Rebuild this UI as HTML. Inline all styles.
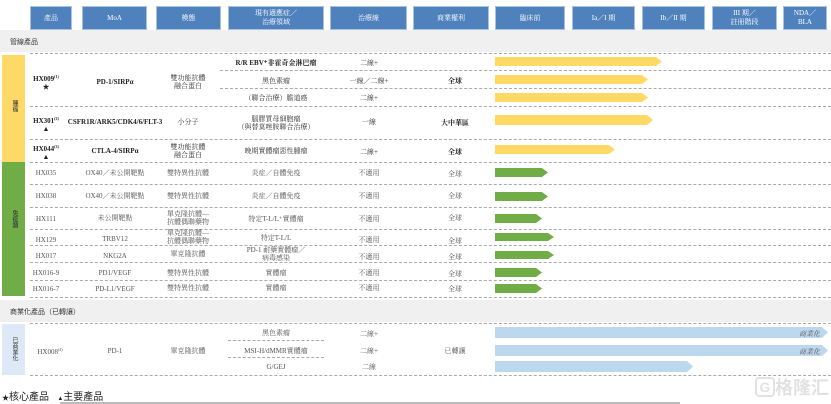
<!DOCTYPE html>
<html><head><meta charset="utf-8"><style>
*{margin:0;padding:0;box-sizing:border-box}
body{width:831px;height:404px;background:#fff;position:relative;overflow:hidden;font-family:"Liberation Serif","Noto Serif CJK SC","Noto Sans CJK TC",serif;color:#333}
.a{position:absolute}
.h{position:absolute;top:6px;height:24px;background:#4f81bd;color:#fff;font-size:7px;display:flex;align-items:center;justify-content:center;text-align:center;line-height:9px;border:1px solid #a8c2e2}
.d{position:absolute;height:0;border-top:1px dashed #aaa}
.t{position:absolute;font-size:7px;transform:translate(-50%,-50%);text-align:center;white-space:nowrap;line-height:8px}
.b{font-weight:bold;color:#222}
.g{color:#555}
.bar{position:absolute;clip-path:polygon(0 0,calc(100% - 6px) 0,100% 50%,calc(100% - 6px) 100%,0 100%)}
.y{background:#ffd966}.gr{background:#70ad47}.bl{background:#bdd7ee}
.v{position:absolute;font-size:6px;writing-mode:vertical-rl;font-family:"Liberation Sans","Noto Sans CJK TC",sans-serif}
</style></head><body>
<div class="h" style="left:30px;width:42px">產品</div>
<div class="h" style="left:82px;width:65px">MoA</div>
<div class="h" style="left:156px;width:65px">模態</div>
<div class="h" style="left:228px;width:96px">現有適應症／<br>治療領域</div>
<div class="h" style="left:330px;width:77px">治療線</div>
<div class="h" style="left:413px;width:76px">商業權利</div>
<div class="h" style="left:495px;width:70px">臨床前</div>
<div class="h" style="left:572px;width:63px">Ia／I 期</div>
<div class="h" style="left:642px;width:63px">Ib／II 期</div>
<div class="h" style="left:712px;width:65px">III 期／<br>註冊階段</div>
<div class="h" style="left:783px;width:44px">NDA／<br>BLA</div>

<div class="a" style="left:0;top:30px;width:831px;height:22px;background:#f0f0f0"></div>
<div class="a" style="left:10px;top:37px;font-size:7px;font-family:'Liberation Sans','Noto Sans CJK TC',sans-serif">管線產品</div>
<div class="a" style="left:0;top:300px;width:831px;height:22px;background:#f0f0f0"></div>
<div class="a" style="left:10px;top:307px;font-size:7px;font-family:'Liberation Sans','Noto Sans CJK TC',sans-serif">商業化產品（已轉讓）</div>

<div class="a" style="left:2px;top:55px;width:23px;height:107px;background:#ffd966"></div>
<div class="v" style="left:10px;top:100px">腫瘤</div>
<div class="a" style="left:2px;top:162px;width:23px;height:134px;background:#70ad47"></div>
<div class="v" style="left:10px;top:210px;color:#223">免疫類</div>
<div class="a" style="left:2px;top:324px;width:23px;height:51px;background:#dde9f6"></div>
<div class="v" style="left:10px;top:337px">已商業化</div>

<div class="d" style="left:30px;width:801px;top:53px"></div>
<div class="d" style="left:220px;width:611px;top:70px"></div>
<div class="d" style="left:220px;width:611px;top:88px"></div>
<div class="d" style="left:30px;width:801px;top:106px"></div>
<div class="d" style="left:30px;width:801px;top:139px"></div>
<div class="d" style="left:30px;width:801px;top:162px"></div>
<div class="d" style="left:30px;width:801px;top:184px"></div>
<div class="d" style="left:30px;width:801px;top:207px"></div>
<div class="d" style="left:30px;width:801px;top:229px"></div>
<div class="d" style="left:30px;width:801px;top:245px"></div>
<div class="d" style="left:30px;width:801px;top:262px"></div>
<div class="d" style="left:30px;width:801px;top:280px"></div>
<div class="d" style="left:30px;width:801px;top:297px"></div>
<div class="d" style="left:30px;width:801px;top:323px"></div>
<div class="d" style="left:228px;width:96px;top:340px"></div>
<div class="d" style="left:228px;width:96px;top:357px"></div>
<div class="d" style="left:30px;width:801px;top:375px"></div>

<div class="t b" style="left:46px;top:82px">HX009<sup style="font-size:4px">(1)</sup><br>★</div>
<div class="t b" style="left:115px;top:82px">PD-1/SIRPα</div>
<div class="t" style="left:188px;top:82px">雙功能抗體<br>融合蛋白</div>
<div class="t b" style="left:276px;top:63px">R/R EBV⁺非霍奇金淋巴瘤</div>
<div class="t" style="left:276px;top:81px">黑色素瘤</div>
<div class="t" style="left:276px;top:98px">（聯合治療）膽道癌</div>
<div class="t" style="left:369px;top:63px">二線+</div>
<div class="t" style="left:369px;top:81px">一線／二線+</div>
<div class="t" style="left:369px;top:98px">二線+</div>
<div class="t b" style="left:455px;top:81px">全球</div>
<div class="t b" style="left:46px;top:124px">HX301<sup style="font-size:4px">(2)</sup><br>▲</div>
<div class="t b" style="left:115px;top:122px">CSFR1R/ARK5/CDK4/6/FLT-3</div>
<div class="t" style="left:188px;top:122px">小分子</div>
<div class="t" style="left:276px;top:123px">腦膠質母細胞瘤<br>（與替莫唑胺聯合治療）</div>
<div class="t" style="left:369px;top:122px">一線</div>
<div class="t b" style="left:455px;top:123px">大中華區</div>
<div class="t b" style="left:46px;top:152px">HX044<sup style="font-size:4px">(3)</sup><br>▲</div>
<div class="t b" style="left:115px;top:151px">CTLA-4/SIRPα</div>
<div class="t" style="left:188px;top:151px">雙功能抗體<br>融合蛋白</div>
<div class="t" style="left:276px;top:151px">晚期實體瘤惡性腫瘤</div>
<div class="t" style="left:369px;top:152px">二線+</div>
<div class="t b" style="left:455px;top:152px">全球</div>

<div class="t g" style="left:46px;top:173px">HX035</div><div class="t g" style="left:115px;top:173px">OX40／未公開靶點</div><div class="t g" style="left:188px;top:173px">雙特異性抗體</div><div class="t g" style="left:276px;top:173px">炎症／自體免疫</div><div class="t g" style="left:369px;top:173px">不適用</div><div class="t g" style="left:455px;top:174px">全球</div>
<div class="t g" style="left:46px;top:196px">HX038</div><div class="t g" style="left:115px;top:196px">OX40／未公開靶點</div><div class="t g" style="left:188px;top:196px">雙特異性抗體</div><div class="t g" style="left:276px;top:196px">炎症／自體免疫</div><div class="t g" style="left:369px;top:196px">不適用</div><div class="t g" style="left:455px;top:196px">全球</div>
<div class="t g" style="left:46px;top:219px">HX111</div><div class="t g" style="left:115px;top:218px">未公開靶點</div><div class="t g" style="left:188px;top:218px">單克隆抗體—<br>抗體偶聯藥物</div><div class="t g" style="left:276px;top:219px">特定T-L/L⁺實體瘤</div><div class="t g" style="left:369px;top:219px">不適用</div><div class="t g" style="left:455px;top:218px">全球</div>
<div class="t g" style="left:46px;top:240px">HX129</div><div class="t g" style="left:115px;top:239px">TRBV12</div><div class="t g" style="left:188px;top:237px">單克隆抗體—<br>抗體偶聯藥物</div><div class="t g" style="left:276px;top:238px">特定T-L/L</div><div class="t g" style="left:369px;top:240px">不適用</div><div class="t g" style="left:455px;top:241px">全球</div>
<div class="t g" style="left:46px;top:256px">HX017</div><div class="t g" style="left:115px;top:256px">NKG2A</div><div class="t g" style="left:188px;top:254px">單克隆抗體</div><div class="t g" style="left:276px;top:254px">PD-1 耐藥實體瘤／<br>病毒感染</div><div class="t g" style="left:369px;top:257px">不適用</div><div class="t g" style="left:455px;top:257px">全球</div>
<div class="t g" style="left:46px;top:273px">HX016-9</div><div class="t g" style="left:115px;top:273px">PD1/VEGF</div><div class="t g" style="left:188px;top:273px">雙特異性抗體</div><div class="t g" style="left:276px;top:273px">實體瘤</div><div class="t g" style="left:369px;top:273px">不適用</div><div class="t g" style="left:455px;top:274px">全球</div>
<div class="t g" style="left:46px;top:289px">HX016-7</div><div class="t g" style="left:115px;top:289px">PD-L1/VEGF</div><div class="t g" style="left:188px;top:288px">雙特異性抗體</div><div class="t g" style="left:276px;top:288px">實體瘤</div><div class="t g" style="left:369px;top:288px">不適用</div><div class="t g" style="left:455px;top:289px">全球</div>

<div class="t g" style="left:50px;top:351px">HX008<sup style="font-size:4px">(4)</sup></div>
<div class="t g" style="left:115px;top:351px">PD-1</div>
<div class="t g" style="left:188px;top:351px">單克隆抗體</div>
<div class="t g" style="left:276px;top:333px">黑色素瘤</div>
<div class="t g" style="left:276px;top:351px">MSI-H/dMMR實體瘤</div>
<div class="t g" style="left:276px;top:367px">G/GEJ</div>
<div class="t g" style="left:369px;top:334px">二線+</div>
<div class="t g" style="left:369px;top:351px">二線+</div>
<div class="t g" style="left:369px;top:367px">二線</div>
<div class="t g" style="left:455px;top:351px">已轉讓</div>

<div class="bar y" style="left:495px;top:57px;width:167px;height:9px"></div>
<div class="bar y" style="left:495px;top:75px;width:153px;height:9px"></div>
<div class="bar y" style="left:495px;top:93px;width:153px;height:9px"></div>
<div class="bar y" style="left:495px;top:115px;width:158px;height:10px"></div>
<div class="bar y" style="left:495px;top:145px;width:120px;height:9px"></div>
<div class="bar gr" style="left:495px;top:168px;width:53px;height:9px"></div>
<div class="bar gr" style="left:495px;top:192px;width:53px;height:9px"></div>
<div class="bar gr" style="left:495px;top:214px;width:47px;height:9px"></div>
<div class="bar gr" style="left:495px;top:233px;width:59px;height:8px"></div>
<div class="bar gr" style="left:495px;top:251px;width:59px;height:8px"></div>
<div class="bar gr" style="left:495px;top:268px;width:47px;height:9px"></div>
<div class="bar gr" style="left:495px;top:284px;width:47px;height:9px"></div>
<div class="bar bl" style="left:495px;top:327px;width:333px;height:11px"></div>
<div class="bar bl" style="left:495px;top:345px;width:333px;height:11px"></div>
<div class="bar bl" style="left:495px;top:361px;width:198px;height:11px"></div>
<div class="a" style="left:799px;top:329px;font-size:7px;font-style:italic;color:#555">商業化</div>
<div class="a" style="left:799px;top:347px;font-size:7px;font-style:italic;color:#555">商業化</div>

<div class="a" style="left:2px;top:388px;font-size:10px;font-family:'Liberation Sans','Noto Sans CJK TC',sans-serif;color:#222"><span style="font-size:7px">★</span>核心產品 &nbsp;&nbsp;<span style="font-size:6px">▲</span>主要產品</div>
<div class="a" style="left:60px;top:402px;width:620px;height:2px;background:#bbb"></div>
<div class="a" style="left:755px;top:377px;font-size:18px;line-height:22px;color:#e2e2e2;font-family:'Liberation Sans','Noto Sans CJK SC',sans-serif;font-weight:bold;white-space:nowrap"><span style="display:inline-block;border:2px solid #e2e2e2;border-radius:4px;width:20px;height:20px;font-size:14px;text-align:center;line-height:16px;vertical-align:top">G</span>格隆汇</div>
</body></html>
